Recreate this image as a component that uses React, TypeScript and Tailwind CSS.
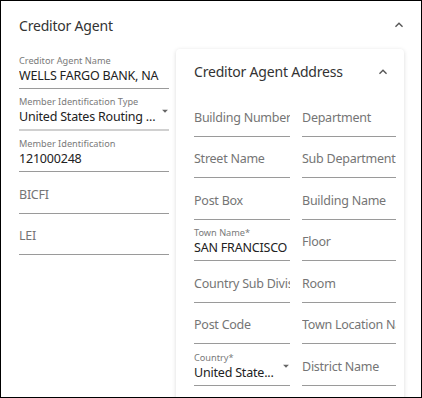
import React from 'react'

type FieldProps = {
  label: string
  value?: string
  select?: boolean
  thick?: boolean
}

const font = { fontFamily: '"Noto Sans", "Open Sans", sans-serif' }

const Caret = () => (
  <svg width="16" height="16" viewBox="0 0 24 24" className="text-[#555]">
    <path fill="currentColor" d="M7.41 15.41L12 10.83l4.59 4.58L18 14l-6-6-6 6z" />
  </svg>
)

const DropArrow = () => (
  <svg width="14" height="14" viewBox="0 0 24 24" className="absolute right-[-3px] top-[15px] text-[#666]">
    <path fill="currentColor" d="M7 10l5 5 5-5z" />
  </svg>
)

const Field: React.FC<FieldProps> = ({ label, value, select, thick }) => {
  const line = thick ? 'border-b-2 border-[#d0d0d0]' : 'border-b border-[#9a9a9a]'
  if (value === undefined) {
    return (
      <div className={`h-[41.5px] flex flex-col justify-end ${line}`}>
        <div className="text-[12.5px] tracking-[-0.25px] leading-[18px] pb-[9px] text-[#757575] whitespace-nowrap overflow-hidden">
          {label}
        </div>
      </div>
    )
  }
  return (
    <div className={`relative h-[41.5px] flex flex-col justify-end ${line}`}>
      <div className="text-[9.2px] leading-[12px] text-[#7a7a7a] whitespace-nowrap">{label}</div>
      <div className={`text-[12.5px] tracking-[-0.2px] leading-[18px] pb-[3px] text-[#222] whitespace-nowrap overflow-hidden ${select ? 'pr-[10px]' : ''}`}>
        {value}
      </div>
      {select && <DropArrow />}
    </div>
  )
}

export default function App() {
  return (
    <div style={font} className="w-[422px] h-[398px] border border-black bg-white overflow-hidden">
      <div className="h-[46.5px] flex items-center justify-between pl-[18px] pr-[14px] pt-[2px]">
        <div className="text-[14px] tracking-[-0.2px] text-[#333]">Creditor Agent</div>
        <Caret />
      </div>
      <div className="flex">
        <div className="w-[150px] ml-[18px] flex flex-col">
          <Field label="Creditor Agent Name" value="WELLS FARGO BANK, NA" />
          <Field label="Member Identification Type" value="United States Routing ..." select thick />
          <Field label="Member Identification" value="121000248" />
          <Field label="BICFI" />
          <Field label="LEI" />
        </div>
        <div className="ml-[7px] mt-[1px] w-[228px] h-[400px] bg-white rounded-[4px] shadow-[0_1px_4px_rgba(0,0,0,0.15)] pl-[18px] pr-[8px]">
          <div className="h-[46.5px] flex items-center justify-between pr-[5px]">
            <div className="text-[14px] tracking-[-0.2px] text-[#333]">Creditor Agent Address</div>
            <Caret />
          </div>
          <div className="grid grid-cols-[96px_94px] gap-x-[12px]">
            <Field label="Building Number" />
            <Field label="Department" />
            <Field label="Street Name" />
            <Field label="Sub Department" />
            <Field label="Post Box" />
            <Field label="Building Name" />
            <Field label="Town Name*" value="SAN FRANCISCO" />
            <Field label="Floor" />
            <Field label="Country Sub Division" />
            <Field label="Room" />
            <Field label="Post Code" />
            <Field label="Town Location Name" />
            <Field label="Country*" value="United State..." select />
            <Field label="District Name" />
          </div>
        </div>
      </div>
    </div>
  )
}
